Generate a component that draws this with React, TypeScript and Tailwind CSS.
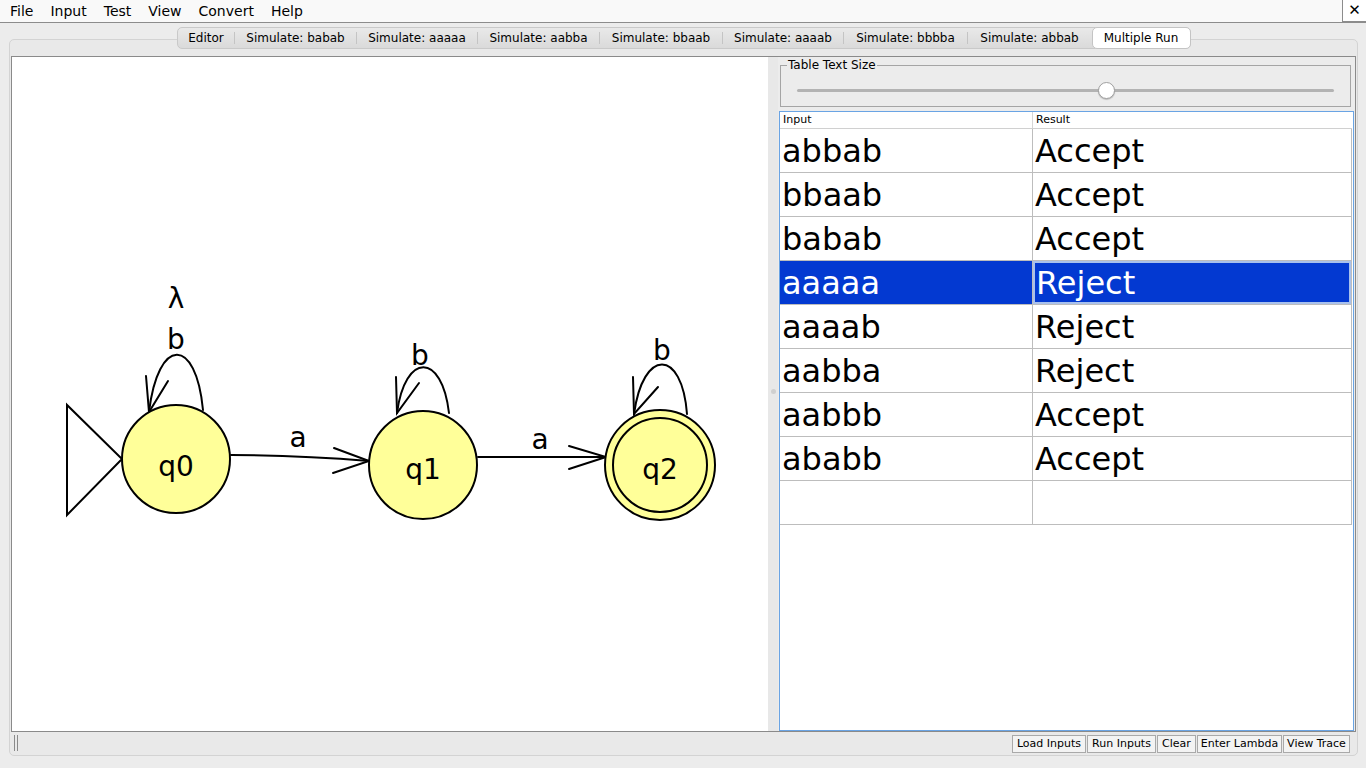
import React from 'react';

const menus = ['File', 'Input', 'Test', 'View', 'Convert', 'Help'];

const tabs = [
  { label: 'Editor', w: 'w-[57px]' },
  { label: 'Simulate: babab', w: 'w-[122px]' },
  { label: 'Simulate: aaaaa', w: 'w-[121px]' },
  { label: 'Simulate: aabba', w: 'w-[122px]' },
  { label: 'Simulate: bbaab', w: 'w-[123px]' },
  { label: 'Simulate: aaaab', w: 'w-[121px]' },
  { label: 'Simulate: bbbba', w: 'w-[124px]' },
  { label: 'Simulate: abbab', w: 'w-[124px]' },
];

const rows = [
  ['abbab', 'Accept'],
  ['bbaab', 'Accept'],
  ['babab', 'Accept'],
  ['aaaaa', 'Reject'],
  ['aaaab', 'Reject'],
  ['aabba', 'Reject'],
  ['aabbb', 'Accept'],
  ['ababb', 'Accept'],
  ['', ''],
];

const buttons = [
  { label: 'Load Inputs', w: 'w-[74px]' },
  { label: 'Run Inputs', w: 'w-[69px]' },
  { label: 'Clear', w: 'w-[39px]' },
  { label: 'Enter Lambda', w: 'w-[85px]' },
  { label: 'View Trace', w: 'w-[67px]' },
];

const Automaton: React.FC = () => (
  <svg width="756" height="674" viewBox="12 57 756 674" className="block">
    <g stroke="#000" strokeWidth="2" fill="none" strokeLinecap="round">
      {/* initial arrow */}
      <polygon points="67,405 67,515 122,459" fill="#fff" />
      {/* q0 -> q1 */}
      <path d="M231 455 Q 300 455 369 461" />
      <path d="M334 448 L369 461 L333 473" />
      {/* q1 -> q2 */}
      <path d="M478 457 L606 457" />
      <path d="M569 446 L606 457 L569 469" />
      {/* loops */}
      <path d="M203 410 C 196 336, 158 336, 149 412" />
      <path d="M146 376 L149 412 L168 381" />
      <path d="M449 413 C 442 352, 405 352, 397 413" />
      <path d="M396 377 L397 413 L419 383" />
      <path d="M687 414 C 682 348, 643 348, 634 414" />
      <path d="M633 377 L634 414 L658 387" />
    </g>
    <g stroke="#000" strokeWidth="2" fill="#ffff99">
      <circle cx="176" cy="459" r="54" />
      <circle cx="423" cy="465" r="54" />
      <circle cx="660" cy="465" r="55" />
      <circle cx="660" cy="465" r="47" />
    </g>
    <g fontFamily="'DejaVu Sans', sans-serif" fontSize="28" textAnchor="middle" fill="#000">
      <text x="176" y="476">q0</text>
      <text x="423" y="479">q1</text>
      <text x="660" y="479">q2</text>
      <text x="298" y="447">a</text>
      <text x="540" y="449">a</text>
      <text x="176" y="349">b</text>
      <text x="176" y="308">λ</text>
      <text x="420" y="365">b</text>
      <text x="662" y="360">b</text>
    </g>
  </svg>
);

const App: React.FC = () => {
  return (
    <div className="w-[1366px] h-[768px] bg-[#ececec] flex flex-col overflow-hidden font-['DejaVu_Sans',sans-serif] text-black">
      {/* menu bar */}
      <div className="h-[23px] shrink-0 bg-[#f9f9f9] border-b border-[#8c8c8c] flex items-center text-[14px]">
        <div className="flex gap-[17px] pl-[10px]">
          {menus.map((m) => (
            <span key={m}>{m}</span>
          ))}
        </div>
        <div className="ml-auto w-[24px] h-[22px] self-start border-l border-b border-[#8c8c8c] bg-white flex items-center justify-center text-[15px] font-bold">
          ✕
        </div>
      </div>

      <div className="flex-1 flex flex-col pl-[9px] pr-[8px] pt-[4px] pb-[12px]">
        {/* tabs */}
        <div className="relative z-10 flex justify-center">
          <div className="flex h-[22px] rounded-[5px] border border-[#c9c9c9] bg-gradient-to-b from-[#e9e9e9] to-[#dadada] text-[12px]">
            {tabs.map((t, i) => (
              <div key={t.label} className={`${t.w} flex items-center justify-center`}>
                {i > 0 && <span className="w-px h-[12px] bg-[#c4c4c4] -ml-px" />}
                <span className="flex-1 text-center">{t.label}</span>
              </div>
            ))}
            <div className="w-[99px] -my-px -mr-px rounded-[5px] border border-[#c4c4c4] bg-white flex items-center justify-center">
              Multiple Run
            </div>
          </div>
        </div>

        {/* tabbed panel */}
        <div className="-mt-[10px] flex-1 flex flex-col rounded-[5px] border border-[#d3d3d3] bg-[#e9e9e9] pt-[16px] px-[1px]">
          <div className="h-[676px] flex border border-[#8a8a8a]">
            {/* canvas */}
            <div className="w-[756px] bg-white">
              <Automaton />
            </div>

            {/* divider */}
            <div className="w-[10px] bg-[#e8e8e8] flex items-center justify-center">
              <span className="w-[5px] h-[5px] rounded-full bg-[#cfcfcf] -mt-[6px]" />
            </div>

            {/* right panel */}
            <div className="flex-1 flex flex-col bg-[#ececec] pt-[1px]">
              <fieldset className="ml-[2px] mr-[4px] border border-[#a5a5a5] px-[6px] pb-[14px]">
                <legend className="text-[12px] leading-[14px] px-[1px]">Table Text Size</legend>
                <div className="relative mt-[17px] ml-[10px] mr-[10px] h-[3px] rounded-full bg-[#b3b3b3]">
                  <span className="absolute left-[57.6%] -top-[7px] -ml-[8px] w-[17px] h-[17px] rounded-full bg-white border border-[#a0a0a0] shadow-[0_1px_1px_rgba(0,0,0,0.2)]" />
                </div>
              </fieldset>

              <div className="mt-[4px] mx-[1px] flex-1 bg-white border border-[#6aa4e4]">
                <div className="w-[572px] h-[17px] flex border-b border-[#d0d0d0] text-[11px] leading-[16px]">
                  <div className="w-[253px] pl-[3px] border-r border-[#d6d6d6]">Input</div>
                  <div className="flex-1 pl-[3px]">Result</div>
                </div>
                {rows.map(([input, result], i) => {
                  const sel = i === 3;
                  return (
                    <div key={i} className="w-[572px] h-[44px] flex border-b border-r border-[#bdbdbd] text-[32px] leading-[41px]">
                      <div className={`w-[253px] pl-[2px] pt-[2px] border-r border-[#bdbdbd] ${sel ? 'bg-[#0339d1] text-white' : ''}`}>
                        {input}
                      </div>
                      <div className={`flex-1 pt-[2px] ${sel ? 'bg-[#0339d1] text-white border-2 border-[#a9c1ec] leading-[37px] pl-[1px]' : 'pl-[2px]'}`}>
                        {result}
                      </div>
                    </div>
                  );
                })}
              </div>
            </div>
          </div>

          {/* bottom bar */}
          <div className="h-[22px] flex items-start pt-[3px] pr-[6px]">
            <div className="flex gap-[2px] ml-[3px]">
              <span className="w-px h-[16px] bg-[#8a8a8a]" />
              <span className="w-px h-[16px] bg-[#8a8a8a]" />
            </div>
            <div className="ml-auto flex gap-[1px]">
              {buttons.map((b) => (
                <div
                  key={b.label}
                  className={`${b.w} h-[18px] border border-[#a9a9a9] bg-[#f3f3f3] text-[11px] leading-[16px] text-center`}
                >
                  {b.label}
                </div>
              ))}
            </div>
          </div>
        </div>
      </div>
    </div>
  );
};

export default App;
